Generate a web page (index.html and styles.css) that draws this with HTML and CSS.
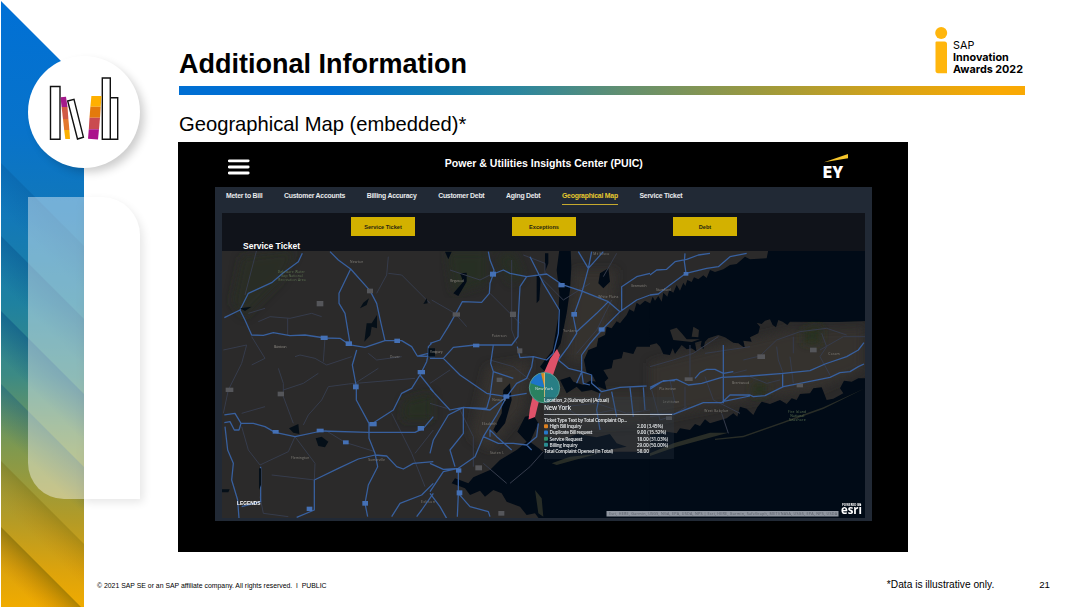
FILE: index.html
```html
<!DOCTYPE html>
<html lang="en">
<head>
<meta charset="utf-8">
<title>Additional Information</title>
<link rel="stylesheet" href="styles.css">
</head>
<body>
<div class="slide">
  <aside class="side">
    <svg class="side-art" width="180" height="607" viewBox="0 0 180 607">
      <defs>
        <linearGradient id="band" gradientUnits="userSpaceOnUse" x1="60" y1="0" x2="42" y2="607">
          <stop offset="0" stop-color="#0070d6"/><stop offset=".22" stop-color="#0873ca"/>
          <stop offset=".36" stop-color="#1278b8"/><stop offset=".5" stop-color="#1e81a0"/>
          <stop offset=".62" stop-color="#3c8a84"/><stop offset=".74" stop-color="#7f994f"/>
          <stop offset=".86" stop-color="#b59b25"/><stop offset=".94" stop-color="#dca30c"/>
          <stop offset="1" stop-color="#f0ab00"/>
        </linearGradient>
        <linearGradient id="fold" gradientUnits="userSpaceOnUse" x1="0" y1="0" x2="-24" y2="24">
          <stop offset="0" stop-color="#00407c" stop-opacity=".4"/><stop offset="1" stop-color="#00407c" stop-opacity="0"/>
        </linearGradient>
        <linearGradient id="fold2" gradientUnits="userSpaceOnUse" x1="0" y1="0" x2="-22" y2="22">
          <stop offset="0" stop-color="#6b5a00" stop-opacity=".5"/><stop offset="1" stop-color="#c07000" stop-opacity="0"/>
        </linearGradient>
        <filter id="soft" x="-30%" y="-30%" width="160%" height="160%"><feGaussianBlur stdDeviation="5"/></filter>
        <clipPath id="bandclip"><path d="M1 1L84 84V607H1Z"/></clipPath>
      </defs>
      <path d="M1 1L84 84V607H1Z" fill="url(#band)"/>
      <g clip-path="url(#bandclip)">
        <path transform="translate(1 163)" d="M0 0L83 83V133L0 50Z" fill="url(#fold)" opacity=".5"/>
        <path transform="translate(1 236)" d="M0 0L83 83V133L0 50Z" fill="url(#fold)" opacity=".8"/>
        <path transform="translate(1 311)" d="M0 0L83 83V133L0 50Z" fill="url(#fold)"/>
        <path transform="translate(1 384)" d="M0 0L83 83V133L0 50Z" fill="url(#fold)" opacity=".7"/>
        <path transform="translate(1 461)" d="M0 0L83 83V133L0 50Z" fill="url(#fold2)" opacity=".55"/>
        <path transform="translate(1 527)" d="M0 0L83 83V133L0 50Z" fill="url(#fold2)"/>
      </g>
      <path d="M84 201H103A40 40 0 0 1 143 241V502H84Z" fill="#000" opacity=".1" filter="url(#soft)"/>
      <path d="M84 197H102A38 38 0 0 1 140 235V499H84Z" fill="#fff"/>
      <path d="M28 197H84V499H64A36 36 0 0 1 28 463Z" fill="#fff" opacity=".42"/>
      <circle cx="89" cy="117" r="55" fill="#000" opacity=".2" filter="url(#soft)"/>
      <circle cx="84" cy="112" r="56" fill="#fff"/>
      <g stroke="#111" stroke-width="1.4" fill="#fff">
        <path d="M50.5 86.5H60V139.3H50.5Z"/>
        <path d="M67.7 101L74 99.3L83.4 137.2L77.5 139Z"/>
        <path d="M102.3 78H110.3V139.3H102.3ZM110.3 97.7H117.7V139.3H110.3Z"/>
      </g>
      <path d="M60.5 97.2L66 96.7L67.5 107H61.6Z" fill="#a41a8b"/>
      <path d="M61.6 107H67.5L68.4 119H63Z" fill="#d05b45"/>
      <path d="M63 119H68.4L69.4 130H64.2Z" fill="#e3782b"/>
      <path d="M64.2 130H69.4L70 139H65.3Z" fill="#fbb000"/>
      <path d="M91.4 96H101.5L100.7 106.7H90.4Z" fill="#ffb000"/>
      <path d="M90.4 106.7H100.7L100 117.8H89.5Z" fill="#e47a0b"/>
      <path d="M89.5 117.8H100L99 129.3H88.8Z" fill="#ca4b50"/>
      <path d="M88.8 129.3H99L98 139.5L88 138.7Z" fill="#ab118b"/>
    </svg>
  </aside>
  <main class="main">
    <header class="head">
      <h1>Additional Information</h1>
      <div class="award">
        <svg width="13" height="47" viewBox="0 0 13 47"><circle cx="6.2" cy="6" r="6" fill="#ffb60d"/><path d="M1.5 14.5H9.5Q12 14.5 12 17V46.2H3Q.5 46.2 .5 43.5V15.5Q.5 14.5 1.5 14.5Z" fill="#ffb60d"/></svg>
        <div class="award-text"><span>SAP</span><b>Innovation</b><b>Awards 2022</b></div>
      </div>
    </header>
    <div class="rule"></div>
    <h2>Geographical Map (embedded)*</h2>
    <section class="frame">
      <div class="topbar">
        <svg class="burger" width="22" height="16" viewBox="0 0 22 16"><path d="M1.3 1.8H20.2M1.3 8H20.2M1.3 14H20.2" stroke="#fff" stroke-width="2.8" stroke-linecap="round"/></svg>
        <div class="app-title">Power &amp; Utilities Insights Center (PUIC)</div>
        <svg class="ey" width="26" height="30" viewBox="0 0 26 30"><path d="M1 9.2L25 1V5.2Z" fill="#f5c52c"/><text x="0" y="25.3" textLength="20.5" lengthAdjust="spacingAndGlyphs">EY</text></svg>
      </div>
      <div class="board">
        <nav class="tabs"><span>Meter to Bill</span><span>Customer Accounts</span><span>Billing Accuracy</span><span>Customer Debt</span><span>Aging Debt</span><span class="on">Geographical Map</span><span>Service Ticket</span></nav>
        <div class="tools">
          <div class="buttons"><button>Service Ticket</button><button>Exceptions</button><button>Debt</button></div>
          <div class="tools-title">Service Ticket</div>
        </div>
        <svg class="map" width="643" height="267" viewBox="222 251 643 267">
          <defs><filter id="b1"><feGaussianBlur stdDeviation="14"/></filter></defs>
          <rect x="222" y="251" width="643" height="267" fill="#2b2a2a"/>
          <!-- western terrain -->
          <g transform="translate(215 250) scale(.33333)">
            <g fill="#273021" filter="url(#b1)"><path d="M80 20L240 0L200 90L90 200L50 160Z" opacity=".7"/><path d="M570 450L650 430V510H560Z" opacity=".8"/></g>
            <g class="minor">
              <path d="M125 0L90 135M520 20L515 75L485 130M520 70L560 75L645 160M130 215L165 200L225 205L290 190L320 200M218 205V255M110 260L150 325L110 345M25 300L95 285L80 340L40 420L25 490M190 355L205 400V440L235 520M205 420L265 400L310 370M265 525L280 495L320 450L340 410L400 402L600 385M240 320L255 315L300 325L335 345L410 320M330 265L325 335M460 310L485 330L560 320M420 400L490 355M240 560L220 605L135 645M240 560L300 640M80 530L100 600L135 645M170 675L300 690M300 640L298 690M530 490L555 540L590 610L630 710M330 540L390 577L480 605M150 175L100 190M600 610L655 540M135 740L145 790L220 800M80 490L150 470"/>
            </g>
            <g class="major">
              <path d="M262 10L250 35L205 68L170 98L100 130L75 180L28 203M75 180L90 210L110 255L145 256L175 248L225 257L270 255L330 264L375 265L405 285L450 292L510 272L560 272L590 290L607 318L660 320M345 5L370 30L407 57L465 122L485 160L498 220L510 272M407 57L372 130V160L390 190L405 280M425 300L412 345L424 410V450L462 520V565L480 610L488 650L460 705L450 760L458 800M607 318L640 310L635 335L615 375L590 415L560 430L535 480L465 525M615 375L655 425M28 495L60 490L78 520L72 540H58L45 515L28 518M78 520H115L150 530L180 547L240 560L320 543L460 547H600L625 535L655 500M30 530L38 600L55 640L50 690L68 750L72 805M137 650V755L80 770M298 690V780L245 802M298 690L370 655L430 627L480 615L515 618L545 650L565 657L595 640L655 635M655 700L620 735L555 760L530 800M655 730L620 780L605 800M650 280L640 290V312"/>
            </g>
            <g fill="#050f18"><path d="M462 145L455 165L435 175L445 158ZM486 195V235L470 230L466 256L448 275L455 220H470ZM302 565L320 560L340 575L330 592L310 588ZM222 535L250 522L253 552L235 548ZM635 145L625 162L638 160ZM20 718H44L40 727H20ZM75 175L110 170L90 183ZM132 655H138V705L132 720ZM640 295H660V320H640Z"/></g>
            <g class="shield"><rect x="305" y="153" width="20" height="16"/><rect x="456" y="116" width="18" height="14"/><rect x="32" y="413" width="23" height="13"/><rect x="188" y="425" width="19" height="14"/></g>
            <g class="ishield"><rect x="317" y="257" width="21" height="13"/><rect x="392" y="274" width="19" height="14"/><rect x="538" y="266" width="17" height="13"/><rect x="414" y="403" width="17" height="15"/><rect x="608" y="360" width="22" height="13"/><rect x="463" y="516" width="22" height="13"/><rect x="608" y="528" width="19" height="14"/><rect x="173" y="540" width="18" height="11"/><rect x="305" y="536" width="21" height="11"/><rect x="384" y="571" width="17" height="12"/><rect x="275" y="770" width="17" height="13"/><rect x="442" y="753" width="17" height="14"/></g>
            <g class="place green"><text x="188" y="68" textLength="82">Delaware Water</text><text x="198" y="81" textLength="65">Gap National</text><text x="190" y="94" textLength="82">Recreation Area</text></g>
            <g class="place"><text x="405" y="40" textLength="40">Newton</text><text x="176" y="295" textLength="39">Blairstown</text><text x="525" y="325" textLength="30">Dover</text><text x="228" y="628" textLength="55">Flemington</text><text x="460" y="633" textLength="50">Somerville</text><text x="618" y="758" textLength="42">Edison</text></g>
          </g>
          <!-- metropolitan area -->
          <g transform="translate(430 250) scale(.33333)">
            <g fill="#273021" filter="url(#b1)" opacity=".7"><path d="M50 5H170V100L70 130Z"/><path d="M200 20L250 5L280 80L240 100Z"/></g>
            <g fill="#35332f" filter="url(#b1)"><path d="M170 350L300 330L280 480L180 600L120 560ZM430 60H560L540 250L460 340L410 330ZM360 430H660V520L360 530Z"/></g>
            <g fill="#010b17">
              <path d="M388 0H422L424 50L420 120L410 190L392 280L375 310L350 370L330 350L368 300L385 200L388 130L380 60Z"/>
              <path d="M320 70L332 85L328 150L320 160ZM70 130L100 95L90 70L110 68V95L85 138ZM510 70L535 55L540 95L520 115L505 100ZM220 420L240 400L245 450L225 520L200 550L190 540L215 490ZM345 10H355V40L345 65ZM45 5H65L55 28Z"/>
              <path d="M660 160L645 152L630 165L620 158L612 185L598 178L590 195L570 220L560 214L545 235L530 230L525 255L505 265L500 290L475 300L462 330L470 370L490 380L505 410L530 420L524 395L535 385L520 360L545 355L550 330L575 325L580 305L610 312L620 290L660 290Z"/>
              <path d="M390 390L420 380L430 395L460 405L480 392L500 395L510 430L485 420L455 425L440 410L410 430Z"/>
              <path d="M285 500L310 495L325 520L300 575L340 605H660V810H330L315 790L290 795L270 770L230 755L215 730L190 720L165 740L150 722L120 735L105 715L65 700L75 685L115 700L130 682L180 660L210 630L260 600L290 575L262 545Z"/>
              <path d="M350 560L400 570L440 552L500 562L540 552L560 580L590 590L520 603H340Z"/>
            </g>
            <path d="M315 720L335 745L340 800L325 790ZM365 640L420 620L500 612L380 645Z" fill="#272c26"/>
            <g class="minor"><path d="M280 15L345 40V70M60 60L150 90L190 70M245 30V240L260 280M5 150L75 190L110 230M270 220L180 130M180 330L250 350L300 390M0 460L50 475M90 480L130 560V650M60 360L0 400M340 605L300 650L240 700M330 80L400 150L480 100M440 310L500 240L545 150M400 470L500 460L590 490L660 480M560 10L520 80M160 640L230 700M350 440L450 500L550 480"/></g>
            <g class="major">
              <path d="M175 5L180 30L192 60L190 72L180 100L178 130L155 157L97 155L75 195L55 230L30 270L0 280M190 72L220 60L240 70L290 80L350 72L395 103L460 125L535 155L570 185L620 150L660 135M290 80L270 110L265 200L264 260L245 285L190 285L135 285L70 292L40 325H0M190 285L182 340L190 365L180 440L170 475L100 472L55 495L10 570L0 610M40 325L90 375L170 430L230 440L260 400L290 385L305 350L310 320M300 20L340 100L388 180L385 250L370 310L350 330L310 320L270 323L262 290M0 415L60 480L100 472L180 480L230 440L200 495L160 560L135 620L85 655L40 665L0 725M85 655V730L120 770L175 785L180 800M0 640L40 658L85 655M85 730L82 800M230 440L290 430M445 5L475 55L455 130L430 200L440 250L415 290L385 330M485 5L475 55L520 5M535 155L500 190L440 245M570 185L515 240L480 280L455 315V365L440 400M660 70L620 80L575 110V180M385 330L415 355L455 365L485 375V400L515 425L570 412L650 408M455 365L460 400L480 405M160 560L205 580L250 580L290 585L320 560L325 520M290 585L305 600M180 560V540L200 560L245 600M190 365L250 385M100 472V550L60 600L75 650M0 730L30 770L50 805"/>
              <path d="M510 430L500 480L510 540M545 425L560 500M600 412L610 500M640 412L645 480"/>
            </g>
            <g class="shield"><rect x="68" y="187" width="22" height="13"/><rect x="240" y="185" width="18" height="16"/><rect x="200" y="383" width="17" height="13"/><rect x="136" y="646" width="20" height="15"/><rect x="205" y="783" width="18" height="14"/><rect x="262" y="295" width="15" height="15"/></g>
            <g class="ishield"><rect x="180" y="65" width="18" height="15"/><rect x="385" y="99" width="19" height="13"/><rect x="424" y="186" width="17" height="14"/><rect x="506" y="232" width="18" height="13"/><rect x="129" y="281" width="19" height="11"/><rect x="220" y="433" width="18" height="13"/><rect x="80" y="721" width="17" height="15"/><rect x="78" y="655" width="16" height="13"/></g>
            <g class="place"><text x="60" y="95" textLength="42">Ringwood</text><text x="185" y="262" textLength="45">Paterson</text><text x="505" y="143" textLength="60">White Plains</text><text x="603" y="110" textLength="47">Greenwich</text><text x="400" y="246" textLength="40">Yonkers</text><text x="187" y="454" textLength="40">Newark</text><text x="155" y="524" textLength="45">Elizabeth</text><text x="180" y="613" textLength="42">Staten I.</text><text x="0" y="309" textLength="38">Parsippany</text><text x="490" y="15" textLength="48">Mt Kisco</text></g>
          </g>
          <!-- Long Island and the Sound -->
          <g transform="translate(650 250) scale(.33333)">
            <g fill="#35332f" filter="url(#b1)"><path d="M0 340L200 290L420 240L640 235V360L500 420L250 460L0 510Z"/></g>
            <path d="M0 162L8 140L15 152L25 138L35 155L40 128L52 140L58 120L70 128L80 105L90 122L100 98L106 108L112 90L125 96L132 82L145 88L160 76L170 84L180 60L195 66L220 58L240 45L260 42L285 20L300 28L350 25L355 0H650V213L560 216L420 215L412 225L398 215L385 210L378 232L368 225L360 208L345 212L335 222L320 218L330 230L325 250L300 262L305 275L280 272L285 295L265 280L250 278L225 262L205 255L175 265L165 275L160 298L152 288L155 272L135 278L140 305L125 295L110 298L95 285L75 312L68 295L60 315L40 312L30 290L20 280L0 285Z" fill="#010b17"/>
            <path d="M60 240L80 233L95 250L110 268H150L125 276L70 270ZM130 230L147 240L145 262L125 260Z" fill="#2c2b2a"/>
            <path d="M0 555L50 545L80 550L90 535L120 540L135 522L150 528L165 508L180 520L230 505L250 490L262 500L270 470L290 476L310 495L322 472L335 455L360 462L390 450L410 462L425 445L440 450L450 432L480 430L490 415L515 412L530 450L550 446L580 430L570 415L582 392L605 395L625 385L645 385V810H0Z" fill="#010b17"/>
            <path d="M0 610L70 580L180 548L235 548L190 560L80 590L0 618ZM195 566L280 557L400 515L440 500L520 472L645 415L520 477L400 520L280 562L195 570Z" fill="#292d27"/>
            <g fill="#26311f" filter="url(#b1)"><path d="M310 400H350V435H305ZM460 240L515 230L510 280H460Z"/></g>
            <g class="minor"><path d="M0 350L70 330L130 310L205 260M120 285V380M165 380L190 450L270 490M165 310L200 305L300 290M280 330L330 318L380 270L450 245L530 235L590 255M380 290L385 330L398 365M430 260V310M420 320L430 400M515 250L530 290L510 320L540 375M510 300L580 260H645M250 370L290 360M300 380L350 400L390 390M60 390L75 460M105 410V480M5 420L30 510L60 500L110 470M235 550L215 490M0 500L70 490"/></g>
            <g class="major">
              <path d="M0 75L20 60L50 58L75 35L110 28L145 15L180 10M105 10L103 35L108 70M0 135L25 132L60 105L108 70L170 55L205 50L240 20L290 10M0 412L35 395L80 388L115 405L155 400L215 382L300 378L400 370L480 362L525 342L590 320L625 300L642 278M0 418L40 392L75 392M135 385L150 368L170 358H195L220 370L250 365M0 493H70L130 470L160 458H215L240 435L300 435L310 440L345 437L400 410L450 400L540 382L570 368L600 365L625 350L642 342M217 455L300 438M220 285V460M398 368V410"/>
            </g>
            <g class="shield"><rect x="322" y="313" width="23" height="14"/><rect x="480" y="293" width="20" height="14"/><rect x="104" y="382" width="24" height="11"/><rect x="440" y="401" width="19" height="11"/><rect x="48" y="499" width="18" height="11"/></g>
            <rect class="ishield" x="101" y="66" width="14" height="11"/>
            <g class="place"><text x="18" y="123" textLength="44">Stamford</text><text x="28" y="420" textLength="49">Plainview</text><text x="38" y="459" textLength="50">Levittown</text><text x="246" y="402" textLength="52">Brentwood</text><text x="163" y="486" textLength="72">West Babylon</text><text x="535" y="314" textLength="34">Coram</text></g>
            <g class="place green"><text x="414" y="488" textLength="54">Fire Island</text><text x="421" y="501" textLength="42">National</text><text x="417" y="514" textLength="50">Seashore</text></g>
          </g>
          <!-- selected region and breakdown -->
          <path d="M557 349L560 355L552 378L540 397L535 417L528.5 419.5L530 408L533 395L542 377L550 359Z" fill="#df5269"/>
          <circle cx="544.5" cy="387.7" r="15.2" fill="#287e84"/>
          <path d="M544.5 387.7V403A15.2 15.2 0 0 1 530.3 383Z" fill="#2a8160"/>
          <path d="M544.5 387.7L530.3 383A15.2 15.2 0 0 1 541 373Z" fill="#1d75c8"/>
          <path d="M544.5 387.7L541 373A15.2 15.2 0 0 1 544.5 372.5Z" fill="#d98a22"/>
          <circle cx="544.5" cy="387.7" r="15.2" fill="none" stroke="#5fa595" stroke-width=".8"/>
          <path d="M544.5 373V397" stroke="#e5c07a" stroke-width=".8"/>
          <rect x="544" y="397" width="130" height="62" fill="#343e48" opacity=".28"/>
          <g class="tip">
            <text x="535" y="389.5" textLength="18" font-size="4" opacity=".75">New York</text>
            <text x="544" y="401.5" textLength="65">Location_2 (Subregion) (Actual)</text>
            <text class="tip-name" x="544" y="409.8" textLength="27">New York</text>
            <path d="M544 414.5H672" stroke="#c6cbd0" stroke-width=".8"/>
            <text x="544" y="422.2" textLength="83">Ticket Type Text by Total Complaint Op...</text>
            <text x="549.5" y="428.2" textLength="32">High Bill Inquiry</text><text x="637" y="428.2" textLength="26">2.00 (3.45%)</text>
            <text x="549.5" y="434.4" textLength="43">Duplicate Bill request</text><text x="637" y="434.4" textLength="29">9.00 (15.52%)</text>
            <text x="549.5" y="440.6" textLength="33">Service Request</text><text x="637" y="440.6" textLength="31">18.00 (31.03%)</text>
            <text x="549.5" y="446.6" textLength="28">Billing Inquiry</text><text x="637" y="446.6" textLength="31">29.00 (50.00%)</text>
            <text x="544" y="452.7" textLength="69">Total Complaint Opened (In Total)</text><text x="637" y="452.7" textLength="12">58.00</text>
          </g>
          <rect x="544" y="424.3" width="4" height="4" rx="1" fill="#dc8020"/><rect x="544" y="430.5" width="4" height="4" rx="1" fill="#2678c9"/><rect x="544" y="436.7" width="4" height="4" rx="1" fill="#2f8f68"/><rect x="544" y="442.8" width="4" height="4" rx="1" fill="#2b8c90"/>
          <text x="237" y="504.5" textLength="23.5" class="legend" lengthAdjust="spacingAndGlyphs">LEGENDS</text>
          <rect x="606.5" y="511" width="232" height="5.5" fill="#9096a0"/>
          <text x="609" y="515.3" textLength="228" class="credit">Esri, HERE, Garmin, USGS, NGA, EPA, USDA, NPS | Esri, HERE, Garmin, SafeGraph, METI/NASA, USGS, EPA, NPS, USDA</text>
          <text x="842" y="505.8" textLength="19" class="powered">POWERED BY</text>
          <text x="841" y="514.3" textLength="21" class="esri" lengthAdjust="spacingAndGlyphs">esri</text>
        </svg>
      </div>
    </section>
    <footer class="foot"><span>© 2021 SAP SE or an SAP affiliate company. All rights reserved. &nbsp;ǀ &nbsp;PUBLIC</span><span class="note">*Data is illustrative only.</span><span class="page">21</span></footer>
  </main>
</div>
</body>
</html>
```
FILE: styles.css
```css
* { box-sizing: border-box; }
body { margin: 0; background: #fff; font-family: "Liberation Sans", Arial, sans-serif; color: #000; }
.slide { display: flex; width: 1080px; height: 607px; overflow: hidden; }
.side { width: 84px; flex: none; position: relative; }
.side-art { position: absolute; left: 0; top: 0; }
.main { flex: 1; display: flex; flex-direction: column; padding-left: 94px; position: relative; }
.head { height: 86px; flex: none; display: flex; justify-content: space-between; padding: 27px 57px 0 1px; }
h1 { margin: 21px 0 0; font-size: 27px; line-height: 32px; white-space: nowrap; }
.award { display: flex; gap: 5px; }
.award-text { display: flex; flex-direction: column; padding-top: 13px; font: 10.8px/12px Inter, sans-serif; white-space: nowrap; width: 70px; }
.rule { height: 9px; flex: none; margin: 0 55px 0 1px; background: linear-gradient(90deg, #006fd3 0%, #006fd3 18%, #117cb5 30%, #2b869f 40%, #608f72 52%, #a19a3a 70%, #dca414 86%, #f9a904 97%); }
h2 { height: 46.5px; flex: none; margin: 0; padding: 17px 0 0 1px; font-size: 20.2px; line-height: 24px; font-weight: 400; }
.frame { width: 729.5px; height: 410px; flex: none; background: #000; padding: 0 35px 0 37px; }
.topbar { height: 45.5px; display: flex; align-items: flex-start; justify-content: space-between; padding: 0 23px 0 13px; }
.burger { margin-top: 17px; }
.app-title { margin-top: 14px; margin-left: 14px; color: #fff; font: bold 10.55px/14px "Liberation Sans", sans-serif; white-space: nowrap; }
.ey { margin-top: 11px; }
.ey text { font: 900 16px Inter, sans-serif; fill: #fff; }
.board { height: 334px; width: 657px; background: #212935; padding: 0 7px; }
.tabs { height: 26px; display: flex; gap: 21.6px; padding: 4px 0 0 4px; color: #e8eaec; font: bold 6.9px/9px "Liberation Sans", sans-serif; letter-spacing: -.24px; white-space: nowrap; }
.tabs .on { color: #e6c82f; border-bottom: 1px solid #c5a92e; height: 14px; }
.tools { height: 38px; background: #10131a; padding-top: 4px; }
.buttons { display: flex; gap: 97px; padding-left: 129px; height: 20px; }
.buttons button { width: 64px; height: 19px; border: 0; padding: 0; background: #d3b100; color: #292611; font: bold 5.6px "Liberation Sans", sans-serif; }
.tools-title { padding: 4px 0 0 21px; color: #fff; font: bold 8.5px/10px "Liberation Sans", sans-serif; }
.map { display: block; font-family: "Open Sans", sans-serif; }
.minor { fill: none; stroke: #363c4c; stroke-width: 3; stroke-linejoin: round; }
.major { fill: none; stroke: #38609f; stroke-width: 3.8; stroke-linejoin: round; }
.shield { fill: #55565a; }
.ishield { fill: #4470b5; }
.place { font-size: 10px; fill: #85827c; }
.green { fill: #5f7553; }
.tip { font-size: 4.8px; }
.tip text { fill: #e8ebed; font-family: "Open Sans", sans-serif; font-weight: 600; }
.tip .tip-name { font-size: 6.3px; }
.legend { font: bold 5.5px "Liberation Sans", sans-serif; fill: #fff; }
.credit { font-size: 3.7px; fill: #565c66; }
.powered { font-size: 2.8px; font-weight: bold; fill: #fff; }
.esri { font: bold 12px "Open Sans", sans-serif; fill: #fff; }
.foot { flex: 1; display: flex; align-items: baseline; padding: 27.5px 30px 0 0; margin-left: -81px; font-size: 6.88px; white-space: nowrap; }
.note { margin-left: auto; font-size: 10.2px; }
.page { margin-left: 45px; font-size: 9.7px; }
```
